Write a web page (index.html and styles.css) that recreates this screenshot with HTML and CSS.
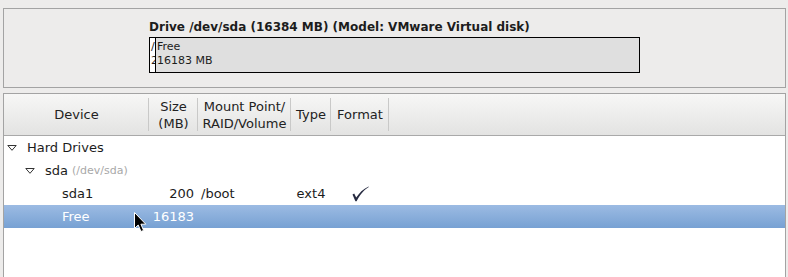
FILE: index.html
```html
<!DOCTYPE html>
<html lang="en">
    <head>
        <meta charset="UTF-8" />
        <title>Partitioning</title>
        <link rel="stylesheet" href="styles.css">
    </head>
    <body>
        <!-- DRIVE SUMMARY -->
        <div class="drive-panel">
            <div class="drive-info">
                <div class="drive-title">Drive /dev/sda (16384 MB) (Model: VMware Virtual disk)</div>
                <div class="drive-bar">
                    <div class="part part-boot">
                        <span>/boot</span>
                        <span>200 MB</span>
                    </div>
                    <div class="part part-free">
                        <span>Free</span>
                        <span>16183 MB</span>
                    </div>
                </div>
            </div>
        </div>

        <!-- DEVICE TREE -->
        <div class="tree-panel">
            <div class="tree-head">
                <div class="head-cell">Device</div>
                <div class="head-cell">Size<br>(MB)</div>
                <div class="head-cell">Mount Point/<br>RAID/Volume</div>
                <div class="head-cell">Type</div>
                <div class="head-cell">Format</div>
                <div class="head-cell head-rest"></div>
            </div>

            <div class="tree-row">
                <div class="cell device level-0">
                    <svg class="expander" width="10" height="6" viewBox="0 0 10 6"><path d="M0.8 0.5 H9.2 L5 5.3 Z" fill="none" stroke="#333" stroke-width="1"/></svg>
                    Hard Drives
                </div>
                <div class="cell"></div><div class="cell"></div><div class="cell"></div><div class="cell"></div><div class="cell"></div>
            </div>

            <div class="tree-row">
                <div class="cell device level-1">
                    <svg class="expander" width="10" height="6" viewBox="0 0 10 6"><path d="M0.8 0.5 H9.2 L5 5.3 Z" fill="none" stroke="#333" stroke-width="1"/></svg>
                    sda <span class="hint">(/dev/sda)</span>
                </div>
                <div class="cell"></div><div class="cell"></div><div class="cell"></div><div class="cell"></div><div class="cell"></div>
            </div>

            <div class="tree-row">
                <div class="cell device level-2">sda1</div>
                <div class="cell size">200</div>
                <div class="cell mount">/boot</div>
                <div class="cell type">ext4</div>
                <div class="cell format">
                    <svg width="17" height="16" viewBox="0 0 17 16"><path d="M0.5 8.6 L2.2 7.6 L4.2 11.6 C7 7 11 3 16.6 0.4 L16.8 1 C11.8 4 8.2 8.4 4.6 15.2 L3.4 15.2 Z" fill="#262a40"/></svg>
                </div>
                <div class="cell"></div>
            </div>

            <div class="tree-row selected">
                <div class="cell device level-2">Free</div>
                <div class="cell size">16183</div>
                <div class="cell mount"></div>
                <div class="cell type"></div>
                <div class="cell format"></div>
                <div class="cell"></div>
                <svg class="pointer" width="14" height="21" viewBox="0 0 14 21"><path d="M0.5 0.5 V16.5 L4.2 13 L7 19.5 L9.6 18.4 L6.9 12.2 H11.8 Z" fill="#000" stroke="#fff" stroke-width="1"/></svg>
            </div>
        </div>
    </body>
</html>
```

FILE: styles.css
```css
/* PARTITIONING SCREEN */
* {
    box-sizing: border-box;
    margin: 0;
    padding: 0;
}

body {
    width: 788px;
    height: 277px;
    padding: 8px 2px 0 3px;
    overflow: hidden;
    font-family: "DejaVu Sans", sans-serif;
    font-size: 13px;
    color: #1c1c1c;
    background: #edeceb;
}

/* drive summary */
.drive-panel {
    height: 80px;
    padding: 10px 0 0 145px;
    border: 1px solid #a3a3a3;
}

.drive-title {
    font-size: 12px;
    font-weight: bold;
    line-height: 16px;
    white-space: nowrap;
}

.drive-bar {
    display: flex;
    width: 491px;
    height: 36px;
    margin-top: 2px;
    border: 1px solid #000;
}

.part {
    display: flex;
    flex-direction: column;
    padding: 2px 0 0 1px;
    overflow: hidden;
    font-size: 11px;
    line-height: 14px;
    white-space: nowrap;
}

.part-boot {
    flex: 0 0 6px;
    background: #fff;
    border-right: 1px solid #000;
}

.part-free {
    flex: 1;
    background: #dfdfdf;
}

/* device tree */
.tree-panel {
    height: 185px;
    margin-top: 5px;
    background: #fff;
    border: 1px solid #a3a3a3;
}

.tree-head,
.tree-row {
    display: grid;
    grid-template-columns: 145px 49px 93px 40px 58px 1fr;
}

.tree-head {
    height: 42px;
    background: linear-gradient(#f7f7f6, #e3e3e2);
    border-bottom: 1px solid #a9a9a9;
}

.head-cell {
    display: flex;
    align-items: center;
    justify-content: center;
    line-height: 17px;
    text-align: center;
    color: #222;
    background: linear-gradient(#c9c9c8, #c9c9c8) right center / 1px 33px no-repeat;
}

.head-rest {
    background: none;
}

.tree-row {
    position: relative;
    height: 23px;
    line-height: 23px;
}

.cell {
    white-space: nowrap;
}

.device {
    display: flex;
    align-items: center;
}

.expander {
    margin-right: 10px;
}

.level-0 {
    padding-left: 3px;
}

.level-1 {
    padding-left: 21px;
}

.level-2 {
    padding-left: 58px;
}

.hint {
    margin-left: 4px;
    font-size: 11px;
    color: #a8a8a8;
}

.size {
    padding-right: 4px;
    text-align: right;
}

.mount {
    padding-left: 3px;
}

.type {
    text-align: center;
}

.format {
    display: flex;
    align-items: center;
    justify-content: center;
}

.selected {
    color: #fff;
    background: linear-gradient(#9cbbe3, #77a1d3);
}

.pointer {
    position: absolute;
    left: 130px;
    top: 7px;
}
```
